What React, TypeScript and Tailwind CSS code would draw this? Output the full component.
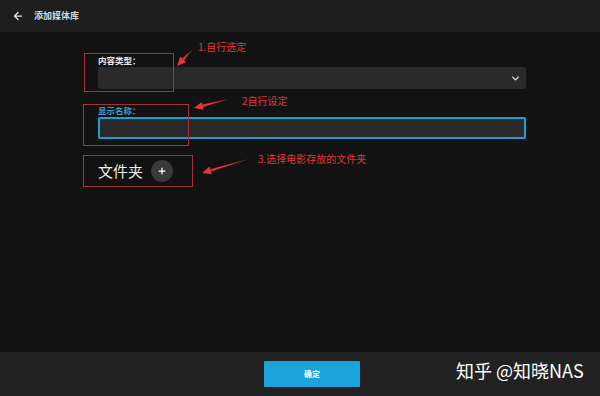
import { ArrowLeft, ChevronDown, Plus } from "lucide-react";

const font = { fontFamily: '"Noto Sans CJK SC", "Noto Sans", sans-serif' };

function Arrow({ x1, y1, x2, y2 }: { x1: number; y1: number; x2: number; y2: number }) {
  const a = Math.atan2(y2 - y1, x2 - x1);
  const len = 9;
  const w = 4;
  const bx = x2 - len * Math.cos(a);
  const by = y2 - len * Math.sin(a);
  const px = -Math.sin(a) * w;
  const py = Math.cos(a) * w;
  return (
    <g>
      <path d={`M${x1} ${y1} L${bx + px * 0.3} ${by + py * 0.3} L${bx - px * 0.3} ${by - py * 0.3} Z`} fill="#e8323c" />
      <path d={`M${x2} ${y2} L${bx + px} ${by + py} L${bx - px} ${by - py} Z`} fill="#e8323c" />
    </g>
  );
}

export default function App() {
  return (
    <div className="relative w-[600px] h-[396px] flex flex-col bg-[#121212] overflow-hidden" style={font}>
      <header className="h-[32px] flex items-center bg-[#1e1e1e] pl-[12px] gap-[10px]">
        <ArrowLeft className="w-[12px] h-[12px] text-[#e5e5e5]" strokeWidth={2.5} />
        <span className="text-[9px] font-bold text-[#d8d8d8]">添加媒体库</span>
      </header>

      <main className="flex-1 pl-[98px] pr-[74px] pt-[22px]">
        <div className="text-[8.5px] font-bold text-[#eaeaea] leading-[12px]">内容类型：</div>
        <div className="mt-[1px] h-[22px] bg-[#2a2a2a] rounded-[2px] flex items-center justify-end pr-[5px]">
          <ChevronDown className="w-[11px] h-[11px] text-[#e0e0e0]" strokeWidth={3} />
        </div>

        <div className="mt-[15px] text-[8.5px] font-bold text-[#3b9fd2] leading-[12px]">显示名称：</div>
        <div className="mt-[1px] h-[22px] bg-[#2a2a2a] border-2 border-[#1b9fd3] rounded-[2px]" />

        <div className="mt-[21px] flex items-center gap-[8px]">
          <span className="text-[15px] text-[#ececec] leading-[20px]">文件夹</span>
          <span className="w-[22px] h-[22px] rounded-full bg-[#3a3a3a] flex items-center justify-center">
            <Plus className="w-[10px] h-[10px] text-white" strokeWidth={3} />
          </span>
        </div>
      </main>

      <footer className="h-[44px] bg-[#222222] flex items-center pl-[264px]">
        <button className="w-[96px] h-[26px] bg-[#1ba3dc] text-white text-[8px] font-bold rounded-[1px]">确定</button>
      </footer>

      {/* annotations */}
      <div className="absolute left-[84px] top-[53px] w-[90px] h-[39px] border border-[#a8303a]" />
      <div className="absolute left-[83px] top-[104px] w-[106px] h-[42px] border border-[#a8303a]" />
      <div className="absolute left-[83px] top-[155px] w-[110px] h-[32px] border border-[#a8303a]" />
      <svg className="absolute left-0 top-0" width="600" height="396">
        <Arrow x1={192} y1={50} x2={177} y2={66} />
        <Arrow x1={229} y1={99} x2={194} y2={108} />
        <Arrow x1={249} y1={159} x2={202} y2={173} />
      </svg>
      <span className="absolute left-[198px] top-[40px] text-[10px] text-[#e8323c] leading-[14px]">1.自行选定</span>
      <span className="absolute left-[242px] top-[94px] text-[10px] text-[#e8323c] leading-[14px]">2自行设定</span>
      <span className="absolute left-[258px] top-[152px] text-[10px] text-[#e8323c] leading-[14px]">3.选择电影存放的文件夹</span>
      <span className="absolute left-[456px] top-[357px] text-[18px] text-white leading-[26px]">知乎 @知晓NAS</span>
    </div>
  );
}
